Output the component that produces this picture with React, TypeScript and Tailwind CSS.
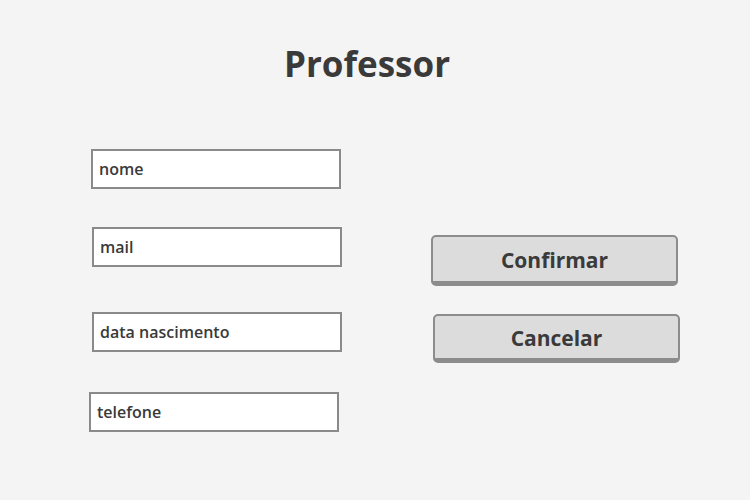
import React from 'react'

const font = { fontFamily: '"Open Sans", "Noto Sans", sans-serif' }

function Field({ label, className }: { label: string; className: string }) {
  return (
    <div
      className={`flex h-[40px] w-[250px] items-center border-2 border-[#8a8a8a] bg-white px-[6px] text-[16px] font-semibold text-[#3a3a3a] ${className}`}
    >
      {label}
    </div>
  )
}

function ActionButton({ label, className }: { label: string; className: string }) {
  return (
    <button
      className={`flex w-[247px] items-center justify-center rounded-[5px] border-2 border-b-[5px] border-[#8c8c8c] bg-[#dcdcdc] pt-[3px] text-[21px] font-bold text-[#3a3a3a] ${className}`}
    >
      {label}
    </button>
  )
}

export default function App() {
  return (
    <div className="h-[500px] w-[750px] overflow-hidden bg-[#f4f4f4]" style={font}>
      <h1 className="mt-[41px] ml-[-16px] text-center text-[35px] leading-[46px] font-bold text-[#3a3a3a]">Professor</h1>

      <div className="flex">
        <div className="flex flex-col">
          <Field label="nome" className="mt-[62px] ml-[91px]" />
          <Field label="mail" className="mt-[38px] ml-[92px]" />
          <Field label="data nascimento" className="mt-[45px] ml-[92px]" />
          <Field label="telefone" className="mt-[40px] ml-[89px]" />
        </div>
        <div className="flex flex-col">
          <ActionButton label="Confirmar" className="mt-[148px] ml-[89px] h-[51px]" />
          <ActionButton label="Cancelar" className="mt-[28px] ml-[91px] h-[49px]" />
        </div>
      </div>
    </div>
  )
}
